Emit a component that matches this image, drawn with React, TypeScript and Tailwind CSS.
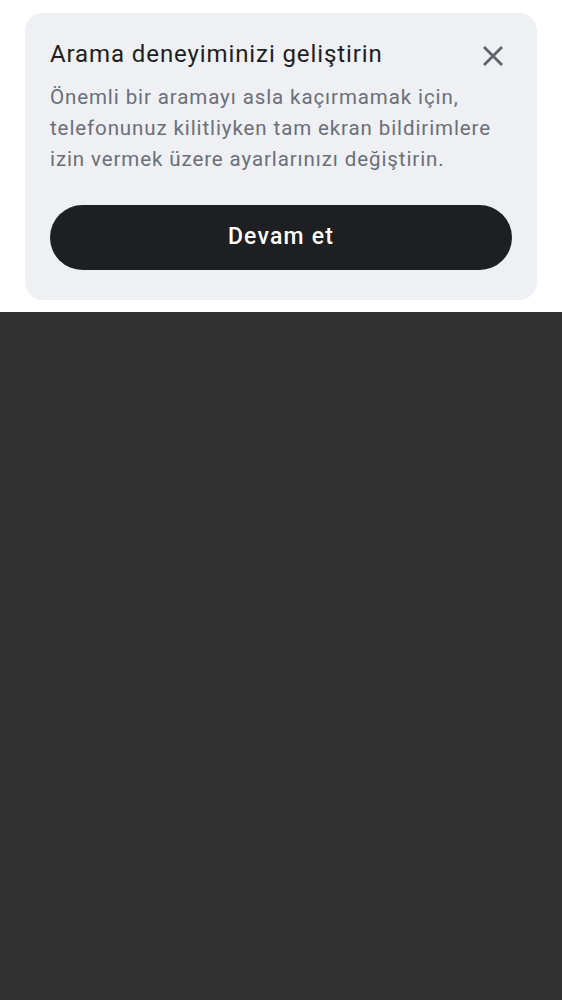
import React from 'react';

const CloseIcon: React.FC = () => (
  <svg width="22" height="22" viewBox="0 0 22 22" fill="none">
    <path d="M2 2L20 20M20 2L2 20" stroke="#5f6369" strokeWidth="2.8" strokeLinecap="butt" />
  </svg>
);

const App: React.FC = () => {
  return (
    <div className="w-[562px] h-[1000px] flex flex-col bg-white" style={{ fontFamily: 'Roboto, "Noto Sans", sans-serif' }}>
      {/* Prompt card */}
      <div className="h-[312px] pt-[13px] px-[25px]">
        <div className="bg-[#eff0f4] rounded-[18px] px-[25px] pt-[27px] pb-[30px]">
          <div className="flex items-start justify-between">
            <h2 className="text-[24px] leading-[28px] tracking-[0.9px] text-[#1d1e21] font-normal">Arama deneyiminizi geliştirin</h2>
            <button className="mr-[8px] mt-[5px]">
              <CloseIcon />
            </button>
          </div>
          <p className="mt-[14px] text-[20.5px] leading-[31px] tracking-[0.9px] text-[#6a6f78]">
            Önemli bir aramayı asla kaçırmamak için, telefonunuz kilitliyken tam ekran bildirimlere izin vermek üzere ayarlarınızı değiştirin.
          </p>
          <button className="mt-[30px] w-full h-[65px] rounded-full bg-[#1e1f23] text-white text-[23px] tracking-[1.2px] font-medium">
            Devam et
          </button>
        </div>
      </div>

      {/* Dimmed area */}
      <div className="flex-1 bg-[#323232]" />
    </div>
  );
};

export default App;
